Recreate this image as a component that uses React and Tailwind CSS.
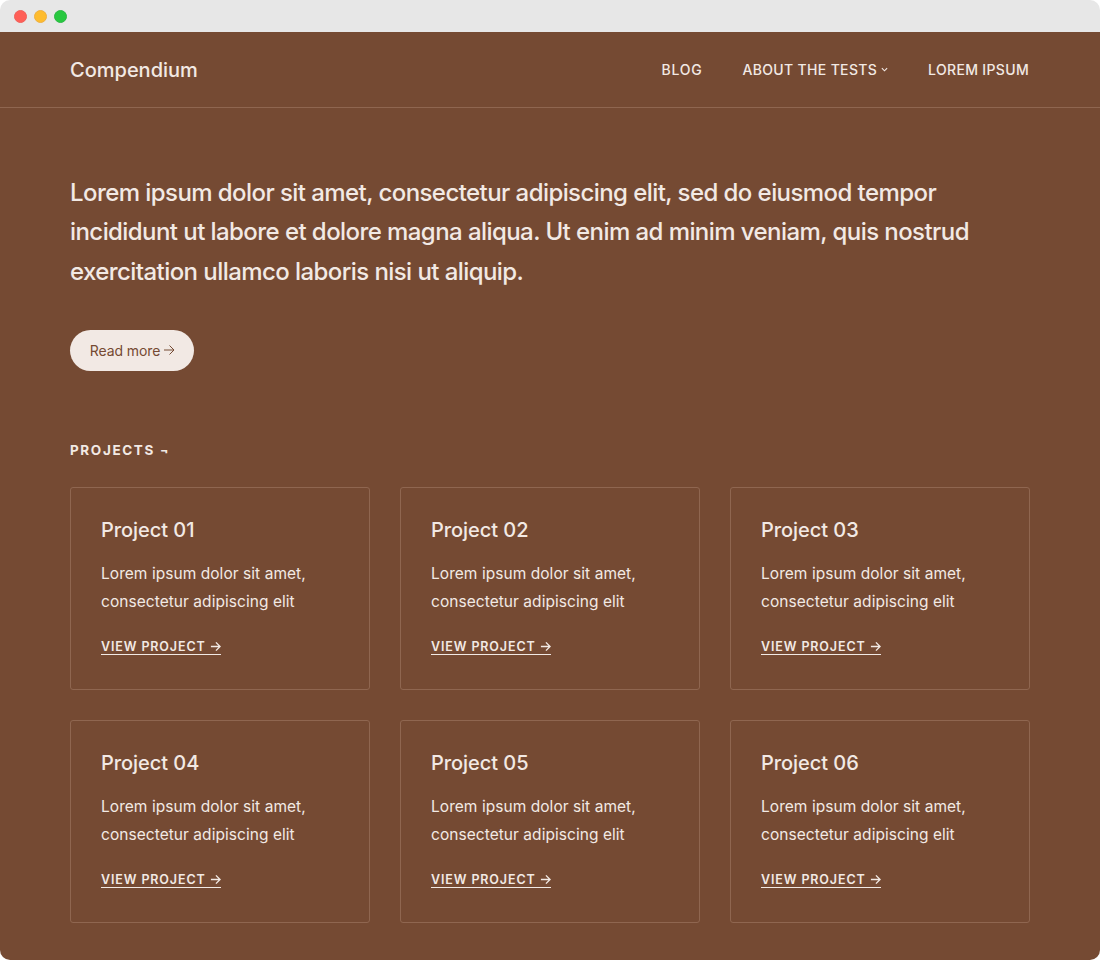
import React from "react";

const projects = ["01", "02", "03", "04", "05", "06"];

function Arrow({ className, width = 1.2 }) {
  return (
    <svg viewBox="0 0 12 12" fill="none" stroke="currentColor" strokeWidth={width} className={className}>
      <path d="M1 6h10M6.5 1.5 11 6l-4.5 4.5" />
    </svg>
  );
}

function Card({ n }) {
  return (
    <div className="h-[203px] rounded-[3px] border border-[#8f6650] pt-[27px] pl-[30px]">
      <h3 className="text-[20px] leading-[30px] font-medium tracking-[-0.05px] text-[#f2e9e4]">Project {n}</h3>
      <p className="mt-[15px] text-[15.5px] leading-[28px] tracking-[0.05px] text-[#f2e9e4]">
        Lorem ipsum dolor sit amet,
        <br />
        consectetur adipiscing elit
      </p>
      <a className="mt-[24px] inline-flex items-center gap-[4px] border-b border-[#f2e9e4] text-[12.5px] leading-[14px] font-semibold tracking-[0.07em] text-[#f2e9e4]">
        VIEW PROJECT
        <Arrow className="h-[11px] w-[11px]" width={1.5} />
      </a>
    </div>
  );
}

export default function App() {
  return (
    <div className="h-[960px] w-[1100px] overflow-hidden bg-white font-['Inter',sans-serif]">
      <div className="flex h-[32px] items-center gap-[7px] rounded-t-[10px] bg-[#e7e7e7] pt-[1px] pl-[13.5px]">
        <span className="h-[13px] w-[13px] rounded-full border border-[#f0605a] bg-[#ff5f57]" />
        <span className="h-[13px] w-[13px] rounded-full border border-[#eeb040] bg-[#febc2e]" />
        <span className="h-[13px] w-[13px] rounded-full border border-[#2cb845] bg-[#28c840]" />
      </div>
      <div className="h-[928px] rounded-b-[10px] bg-[#754a33] text-[#f2e9e4]">
        <header className="flex h-[76px] items-center justify-between border-b border-[#8f6650] pr-[71px] pl-[70px]">
          <div className="text-[20px] leading-[30px] font-medium">Compendium</div>
          <nav className="flex items-center gap-[40px] text-[14px] font-medium tracking-[0.33px]">
            <a className="tracking-[0.8px]">BLOG</a>
            <a className="flex items-center gap-[4px]">
              ABOUT THE TESTS
              <svg viewBox="0 0 8 8" fill="none" stroke="currentColor" strokeWidth="1.3" className="h-[7px] w-[7px]">
                <path d="M1 2.5 4 5.5l3-3" />
              </svg>
            </a>
            <a>LOREM IPSUM</a>
          </nav>
        </header>
        <main className="px-[70px]">
          <p className="mt-[64.6px] text-[24px] leading-[39.6px] font-medium tracking-[-0.57px]">
            Lorem ipsum dolor sit amet, consectetur adipiscing elit, sed do eiusmod tempor incididunt ut labore et dolore magna aliqua. Ut enim ad minim veniam, quis nostrud exercitation ullamco laboris nisi ut aliquip.
          </p>
          <a className="mt-[38.6px] flex h-[41px] w-[124px] items-center justify-center gap-[3px] rounded-full bg-[#f2e9e4] pl-[1px] text-[14px] tracking-[-0.1px] text-[#754a33]">
            Read more
            <Arrow className="h-[12px] w-[12px]" width={1} />
          </a>
          <h2 className="mt-[70px] text-[13.5px] leading-[18px] font-bold tracking-[0.12em]">PROJECTS ¬</h2>
          <div className="mt-[28px] grid grid-cols-3 gap-[30px]">
            {projects.map((n) => (
              <Card key={n} n={n} />
            ))}
          </div>
        </main>
      </div>
    </div>
  );
}
